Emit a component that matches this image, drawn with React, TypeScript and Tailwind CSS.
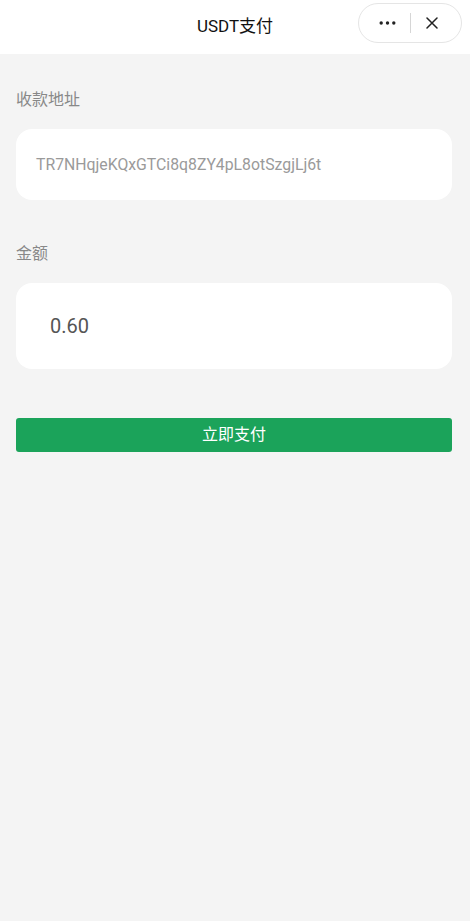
import React from 'react';

const font = { fontFamily: 'Roboto, "Noto Sans CJK SC", sans-serif' };

const Capsule: React.FC = () => (
  <div className="absolute right-[8px] top-[3px] flex h-[40px] w-[104px] items-center rounded-full border border-[#e5e5e5] bg-white">
    <div className="flex w-[51px] items-center justify-center pl-[6px]">
      <svg width="17" height="4" viewBox="0 0 17 4">
        <circle cx="2.2" cy="2" r="1.7" fill="#222" />
        <circle cx="8.5" cy="2" r="1.7" fill="#222" />
        <circle cx="14.8" cy="2" r="1.7" fill="#222" />
      </svg>
    </div>
    <div className="h-[20px] w-px bg-[#d6d6d6]" />
    <div className="flex flex-1 items-center justify-center pr-[8px]">
      <svg width="12" height="12" viewBox="0 0 12 12">
        <path d="M1 1 L11 11 M11 1 L1 11" stroke="#222" strokeWidth="1.5" strokeLinecap="round" />
      </svg>
    </div>
  </div>
);

export default function App() {
  return (
    <div className="min-h-[921px] bg-[#f4f4f4]" style={font}>
      <div className="relative flex h-[54px] items-center justify-center bg-white">
        <span className="text-[17px] text-[#111]">USDT支付</span>
        <Capsule />
      </div>

      <div className="pl-[16px] pr-[18px]">
        <p className="pt-[36px] text-[16px] leading-[20px] text-[#888]">收款地址</p>
        <div className="mt-[19px] flex h-[71px] items-center rounded-[16px] bg-white px-[20px]">
          <span className="text-[15.8px] text-[#9a9a9a]">TR7NHqjeKQxGTCi8q8ZY4pL8otSzgjLj6t</span>
        </div>

        <p className="mt-[44px] text-[16px] leading-[20px] text-[#888]">金额</p>
        <div className="mt-[19px] flex h-[86px] items-center rounded-[16px] bg-white px-[34px]">
          <span className="text-[20px] text-[#555]">0.60</span>
        </div>

        <button className="mt-[49px] flex h-[34px] w-full items-center justify-center rounded-[3px] bg-[#1ba35a] text-[16px] text-white">
          立即支付
        </button>
      </div>
    </div>
  );
}
